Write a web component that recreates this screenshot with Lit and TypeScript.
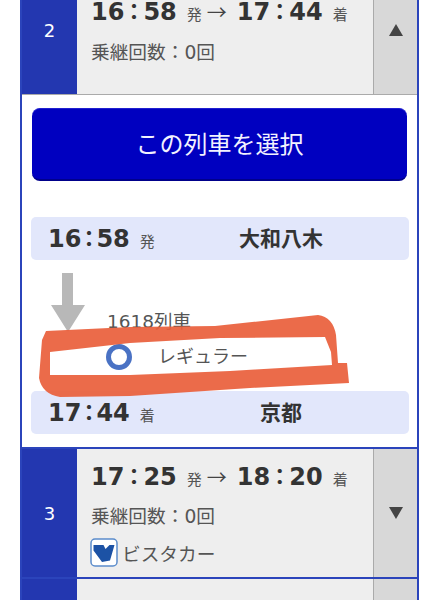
import { LitElement, html, css, svg } from "lit";
import { customElement } from "lit/decorators.js";

@customElement("app-root")
export class AppRoot extends LitElement {
  static styles = css`
    :host {
      display: block;
      position: relative;
      width: 440px;
      height: 600px;
      overflow: hidden;
      background: #fff;
      font-family: "DejaVu Sans", "Noto Sans CJK JP", sans-serif;
      color: #444;
    }
    .list {
      width: 395px;
      margin: -34px 0 0 20px;
      border-left: 2px solid #2b44bb;
      border-right: 2px solid #2b44bb;
    }
    .row {
      display: grid;
      grid-template-columns: 55px 1fr 44px;
      height: 128px;
      background: #eee;
    }
    .row.open { border-bottom: 1px solid #aaa; }
    .row.closed { border-bottom: 2px solid #2b44bb; }
    .num {
      display: flex;
      align-items: center;
      justify-content: center;
      background: #2337b0;
      color: #fff;
      font-size: 18px;
    }
    .info {
      display: flex;
      flex-direction: column;
      justify-content: center;
      gap: 11px;
      padding-left: 14px;
    }
    .open .info { gap: 12px; }
    .times {
      display: flex;
      align-items: baseline;
      height: 28px;
      padding-top: 3px;
      line-height: 28px;
      white-space: nowrap;
    }
    .clock {
      font-size: 24px;
      font-weight: 700;
      line-height: 28px;
      color: #333;
    }
    .colon {
      font-family: "Noto Sans CJK JP", sans-serif;
      font-size: 22px;
      display: inline-block;
      width: 22px;
      margin: 0 -1.5px;
      line-height: 20px;
      text-align: center;
      vertical-align: 1px;
    }
    .mark { font-size: 15px; color: #555; margin-left: 10px; font-family: "Noto Sans CJK JP", sans-serif; }
    .arrow { font-size: 20px; margin: 0 10px 0 5px; color: #444; font-family: "Noto Sans CJK JP", sans-serif; }
    .sub {
      font-size: 18.7px;
      line-height: 26px;
      height: 28px;
      color: #555;
      white-space: nowrap;
    }
    .sub .j { font-family: "Noto Sans CJK JP", sans-serif; }
    .vista {
      display: flex;
      align-items: center;
      gap: 4px;
      margin: -2px 0 0 -1px;
    }
    .vista svg { width: 28px; height: 29px; flex: none; }
    .toggle {
      display: flex;
      align-items: center;
      justify-content: center;
      background: #d8d8d8;
      border-left: 1px solid #aaa;
    }
    .toggle svg { width: 14px; height: 12px; }
    .panel {
      background: #fff;
      padding: 13px 8px 13px 9px;
      border-bottom: 2px solid #2b44bb;
    }
    .select {
      display: flex;
      align-items: center;
      justify-content: center;
      box-sizing: border-box;
      height: 73px;
      margin: 0 0 36px 1px;
      padding-bottom: 4px;
      width: 375px;
      border-radius: 8px;
      background: #0000c0;
      border-top: 1px solid #2020d0;
      border-bottom: 2px solid #00008a;
      color: #f2f2ff;
      font-size: 24px;
      font-family: "Noto Sans CJK JP", sans-serif;
    }
    .station {
      display: grid;
      grid-template-columns: 122px 1fr;
      align-items: center;
      box-sizing: border-box;
      height: 43px;
      padding-bottom: 4px;
      border-radius: 5px;
      background: #e2e7fb;
      white-space: nowrap;
    }
    .station .t {
      display: flex;
      align-items: baseline;
      padding: 4px 0 0 17px;
    }
    .station .colon { margin: 0 -3.5px; }
    .station .name {
      text-align: center;
      font-size: 21px;
      font-weight: 700;
      color: #333;
      font-family: "Noto Sans CJK JP", sans-serif;
    }
    .middle {
      display: grid;
      grid-template-columns: 76px 1fr;
      height: 131px;
    }
    .middle .down { width: 34px; height: 60px; margin: 13px 0 0 20px; }
    .detail { padding-top: 46px; }
    .train { font-size: 18.5px; line-height: 28px; color: #555; }
    .train .j { font-family: "Noto Sans CJK JP", sans-serif; }
    .kind {
      display: flex;
      align-items: center;
      margin-top: 5px;
      font-size: 18px;
      line-height: 28px;
      color: #555;
      font-family: "Noto Sans CJK JP", sans-serif;
    }
    .kind .label { padding-bottom: 4px; }
    .ring {
      box-sizing: border-box;
      width: 26px;
      height: 26px;
      margin: 0 26px 0 -1px;
      border: 5px solid #4a72c4;
      border-radius: 50%;
    }
    .scribble {
      position: absolute;
      left: 0;
      top: 0;
      width: 440px;
      height: 600px;
      pointer-events: none;
      filter: blur(0.7px);
    }
  `;

  private clock(t: string) {
    const [h, m] = t.split(":");
    return html`<span class="clock">${h}<span class="colon">：</span>${m}</span>`;
  }

  private times(a: string, b: string) {
    return html`<div class="times">
      ${this.clock(a)}<span class="mark">発</span><span class="arrow">→</span>${this.clock(b)}<span class="mark">着</span>
    </div>`;
  }

  private tri(up: boolean) {
    return html`<svg viewBox="0 0 14 12"><path d=${up ? "M7 0L14 12H0Z" : "M0 0H14L7 12Z"} fill="#444"></path></svg>`;
  }

  render() {
    return html`
      <div class="list">
        <div class="row open">
          <div class="num">2</div>
          <div class="info">
            ${this.times("16:58", "17:44")}
            <div class="sub"><span class="j">乗継回数：</span>0<span class="j">回</span></div>
          </div>
          <div class="toggle">${this.tri(true)}</div>
        </div>
        <div class="panel">
          <div class="select">この列車を選択</div>
          <div class="station">
            <div class="t">${this.clock("16:58")}<span class="mark">発</span></div>
            <div class="name">大和八木</div>
          </div>
          <div class="middle">
            <svg class="down" viewBox="0 0 34 60">
              <path d="M11 0H22V32H34L17 59L0 32H11Z" fill="#b8b8b8"></path>
            </svg>
            <div class="detail">
              <div class="train">1618<span class="j">列車</span></div>
              <div class="kind"><span class="ring"></span><span class="label">レギュラー</span></div>
            </div>
          </div>
          <div class="station">
            <div class="t">${this.clock("17:44")}<span class="mark">着</span></div>
            <div class="name">京都</div>
          </div>
        </div>
        <div class="row closed">
          <div class="num">3</div>
          <div class="info">
            ${this.times("17:25", "18:20")}
            <div class="sub"><span class="j">乗継回数：</span>0<span class="j">回</span></div>
            <div class="sub vista">
              <svg viewBox="0 0 28 29">
                <rect x="1" y="1" width="26" height="27" rx="4" fill="#fff" stroke="#5b8ccb" stroke-width="1.5"></rect>
                <path d="M3.5 7H13.5L15.5 11L19.5 7H24.5L20 22.5L12 24L3.5 12.5Z" fill="#1c52a5"></path>
              </svg>
              <span class="j">ビスタカー</span>
            </div>
          </div>
          <div class="toggle">${this.tri(false)}</div>
        </div>
        <div class="row"><div class="num"></div><div class="info"></div><div class="toggle"></div></div>
      </div>
      <svg class="scribble" viewBox="0 0 440 600">
        ${svg`<path fill-rule="evenodd" fill="#e9603c" fill-opacity="0.93" d="M46 331 L130 327 L215 326 L318 315 Q333 317 336 335 L338 363 L347 363 L349 383
          L250 388 L130 396 L60 397 Q42 394 39 378 L42 340 Z
          M50 352 L130 343 L220 338 L325 337 L331 352 L332 365 L230 371 L130 375 L50 375 Z"></path>`}
      </svg>
    `;
  }
}
